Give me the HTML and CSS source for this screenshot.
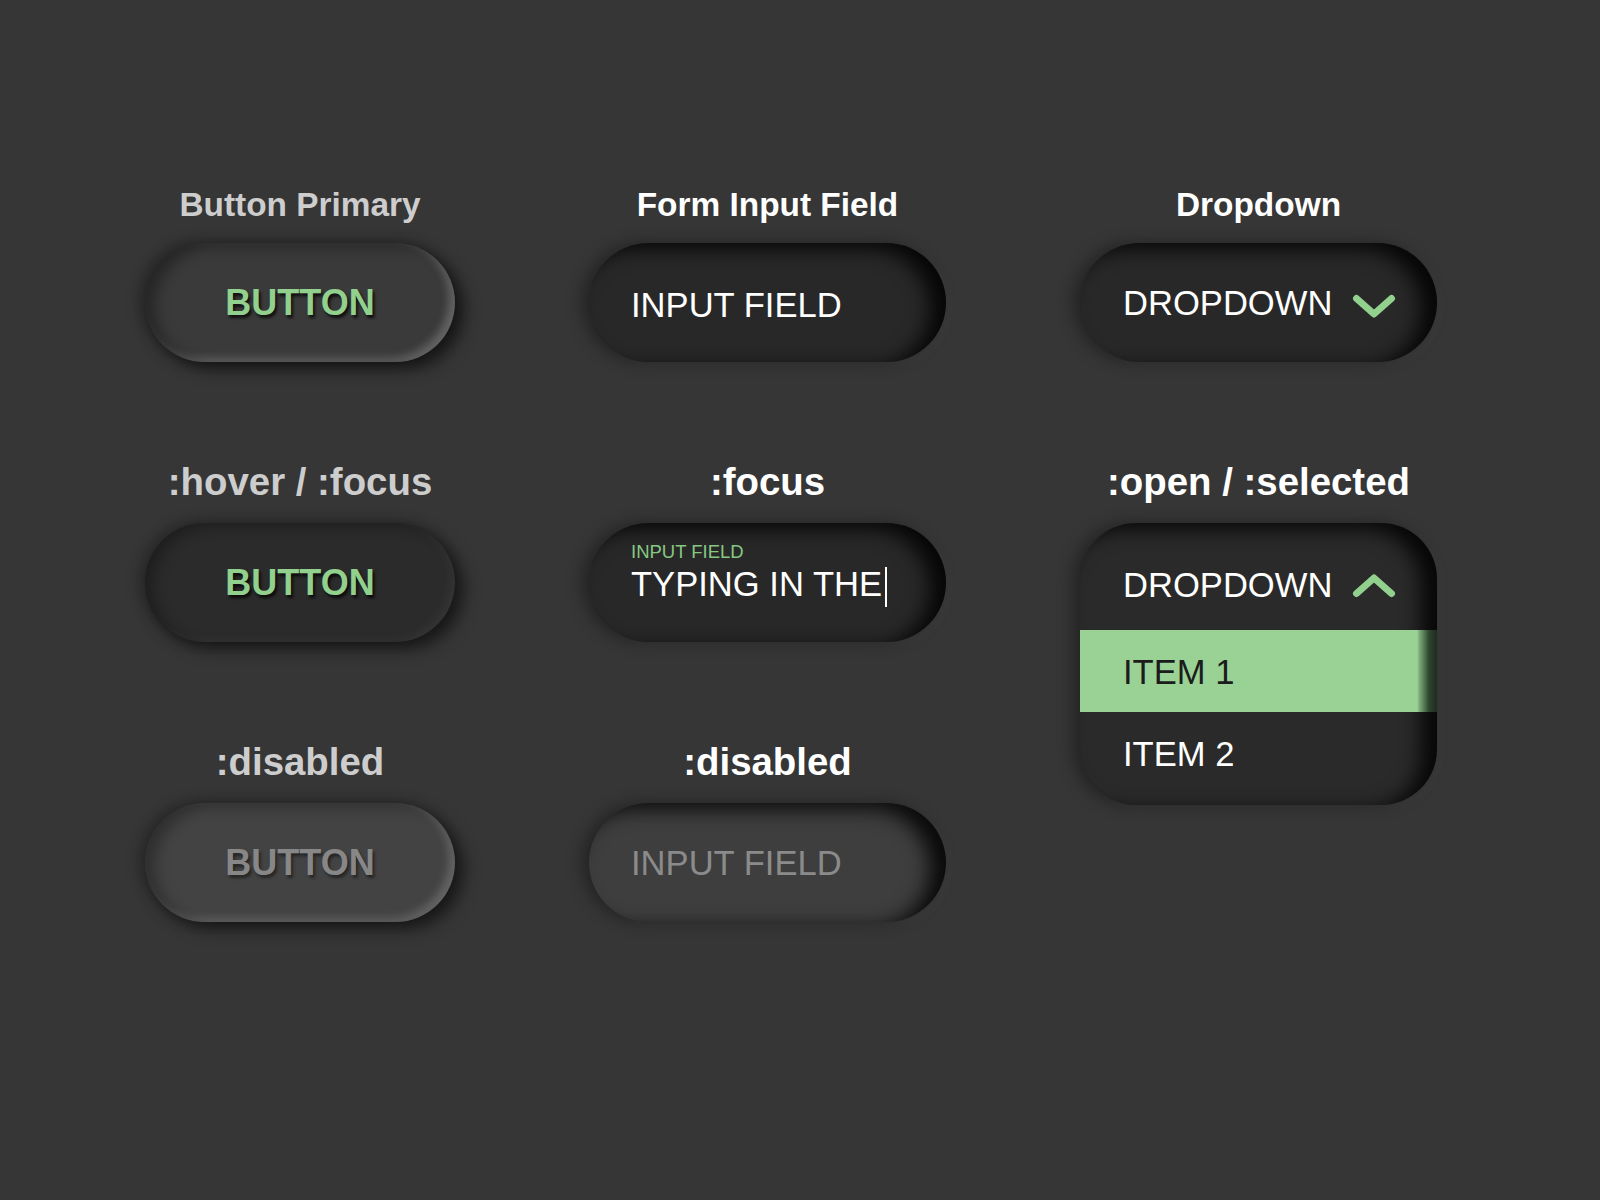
FILE: index.html
```html
<!DOCTYPE html>
<html lang="en">
<head>
<meta charset="utf-8">
<title>Neumorphic Components</title>
<link rel="stylesheet" href="styles.css">
</head>
<body>
<main class="board">
  <section class="cell">
    <h2 class="label label-muted">Button Primary</h2>
    <div class="btn btn-primary">BUTTON</div>
  </section>
  <section class="cell">
    <h2 class="label">Form Input Field</h2>
    <div class="field"><span class="field-text">INPUT FIELD</span></div>
  </section>
  <section class="cell">
    <h2 class="label">Dropdown</h2>
    <div class="field dropdown">
      <span class="field-text">DROPDOWN</span>
      <svg class="chev" viewBox="0 0 44 26" width="44" height="26"><path d="M4.5 4.5 L22 20 L39.5 4.5"/></svg>
    </div>
  </section>

  <section class="cell">
    <h2 class="label label-state label-muted">:hover / :focus</h2>
    <div class="btn btn-hover">BUTTON</div>
  </section>
  <section class="cell">
    <h2 class="label label-state">:focus</h2>
    <div class="field field-focus">
      <span class="float-label">INPUT FIELD</span>
      <span class="field-text">TYPING IN THE<span class="caret"></span></span>
    </div>
  </section>
  <section class="cell cell-span">
    <h2 class="label label-state">:open / :selected</h2>
    <div class="menu">
      <div class="menu-head">
        <span class="field-text">DROPDOWN</span>
        <svg class="chev" viewBox="0 0 44 26" width="44" height="26"><path d="M4.5 21.5 L22 6 L39.5 21.5"/></svg>
      </div>
      <div class="menu-item selected">ITEM 1</div>
      <div class="menu-item">ITEM 2</div>
    </div>
  </section>

  <section class="cell">
    <h2 class="label label-state label-muted">:disabled</h2>
    <div class="btn btn-disabled">BUTTON</div>
  </section>
  <section class="cell">
    <h2 class="label label-state">:disabled</h2>
    <div class="field field-disabled"><span class="field-text">INPUT FIELD</span></div>
  </section>
</main>
</body>
</html>
```

FILE: styles.css
```css
html, body {
  margin: 0;
  padding: 0;
}
body {
  background: #363636;
  width: 1600px;
  height: 1200px;
  font-family: "Liberation Sans", Arial, sans-serif;
  overflow: hidden;
}
.board {
  display: grid;
  grid-template-columns: 310px 357px 357px;
  grid-template-rows: auto auto auto;
  column-gap: 134px;
  row-gap: 104px;
  padding: 186px 0 0 145px;
  align-items: start;
}
.cell {
  display: flex;
  flex-direction: column;
  align-items: stretch;
  gap: 19px;
}
.cell-span {
  grid-row: span 2;
}
.label {
  margin: 0;
  font-size: 33.4px;
  line-height: 38px;
  font-weight: 700;
  color: #ffffff;
  text-align: center;
  white-space: nowrap;
}
.label-state {
  font-size: 38.4px;
  margin: -3px 0 3px;
}
.label-muted {
  color: #cdcdcd;
}

/* Buttons */
.btn {
  height: 119px;
  border-radius: 60px;
  display: flex;
  align-items: center;
  justify-content: center;
  font-size: 36px;
  line-height: 1;
  font-weight: 700;
  color: #92d08e;
  text-shadow: 2px 3px 3px rgba(0, 0, 0, 0.75);
}
.btn-primary {
  background: #3a3a3a;
  box-shadow:
    inset 10px 4px 14px rgba(0, 0, 0, 0.35),
    inset -6px -4px 9px rgba(255, 255, 255, 0.22),
    9px 7px 16px rgba(0, 0, 0, 0.6),
    -6px -2px 14px rgba(0, 0, 0, 0.28);
}
.btn-hover {
  background: #2b2b2b;
  box-shadow:
    inset 8px 4px 14px rgba(0, 0, 0, 0.3),
    inset -5px -3px 8px rgba(255, 255, 255, 0.05),
    9px 7px 16px rgba(0, 0, 0, 0.55),
    -6px -2px 14px rgba(0, 0, 0, 0.25);
}
.btn-disabled {
  background: #434343;
  color: #878787;
  text-shadow: 2px 3px 3px rgba(0, 0, 0, 0.45);
  box-shadow:
    inset 10px 4px 14px rgba(0, 0, 0, 0.3),
    inset -6px -4px 9px rgba(255, 255, 255, 0.18),
    9px 7px 16px rgba(0, 0, 0, 0.55),
    -6px -2px 14px rgba(0, 0, 0, 0.25);
}

/* Input fields */
.field {
  height: 119px;
  box-sizing: border-box;
  border-radius: 60px;
  background: #282828;
  display: flex;
  align-items: center;
  padding: 5px 0 0 42px;
  color: #ffffff;
  box-shadow:
    inset -16px 6px 20px rgba(0, 0, 0, 0.85),
    -7px 0 16px rgba(0, 0, 0, 0.35),
    6px 4px 10px rgba(255, 255, 255, 0.025);
}
.field-text {
  font-size: 34.6px;
  line-height: 34px;
  white-space: nowrap;
}
.dropdown {
  padding: 0 0 0 43px;
}
.chev {
  margin-left: 20px;
  margin-top: 8px;
  fill: none;
  stroke: #92d08e;
  stroke-width: 7;
  stroke-linecap: round;
  stroke-linejoin: round;
}
.field-focus {
  flex-direction: column;
  align-items: flex-start;
  justify-content: flex-start;
  padding: 19px 0 0 42px;
  gap: 6px;
}
.float-label {
  font-size: 18.5px;
  line-height: 19px;
  color: #86c883;
}
.caret {
  display: inline-block;
  width: 2px;
  height: 40px;
  margin-left: 3px;
  background: #ffffff;
  vertical-align: -11px;
}
.field-disabled {
  background: #3e3e3e;
  color: #8b8b8b;
  padding-top: 0;
}

/* Open dropdown */
.menu {
  border-radius: 56px;
  background: #2a2a2a;
  overflow: hidden;
  padding-bottom: 11px;
  color: #ffffff;
  box-shadow:
    inset -16px 6px 20px rgba(0, 0, 0, 0.85),
    -7px 0 16px rgba(0, 0, 0, 0.35),
    6px 4px 10px rgba(255, 255, 255, 0.025);
}
.menu-head {
  height: 107px;
  box-sizing: border-box;
  display: flex;
  align-items: center;
  padding: 17px 0 0 43px;
}
.menu-head .chev {
  margin-top: 0;
}
.menu-item {
  height: 82px;
  box-sizing: border-box;
  display: flex;
  align-items: center;
  padding: 2px 0 0 43px;
  font-size: 34.6px;
  line-height: 34px;
}
.menu-item.selected {
  background: linear-gradient(to right, #9ad296 0, #9ad296 calc(100% - 20px), #7fb07c calc(100% - 18px), #2e442e calc(100% - 8px), #1e2a1e 100%);
  color: #1c1c1c;
}
```
